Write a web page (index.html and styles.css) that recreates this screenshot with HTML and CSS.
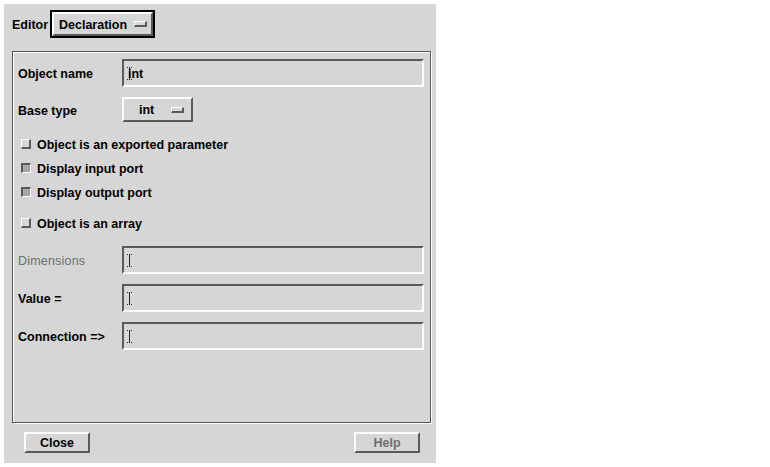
FILE: index.html
```html
<!DOCTYPE html>
<html>
<head>
<meta charset="utf-8">
<link rel="stylesheet" href="styles.css">
</head>
<body>
<div class="dialog">
  <div class="topbar">
    <span class="lbl">Editor</span>
    <div class="focus">
      <div class="optbtn editor"><span>Declaration</span><i class="ind"></i></div>
    </div>
  </div>
  <div class="frame">
    <div class="row r-name">
      <span class="lbl col">Object name</span>
      <div class="field"><i class="cursor"></i><span class="val">int</span></div>
    </div>
    <div class="row r-base">
      <span class="lbl col">Base type</span>
      <div class="optbtn base"><span>int</span><i class="ind"></i></div>
    </div>
    <div class="check c1"><i class="box"></i><span class="lbl">Object is an exported parameter</span></div>
    <div class="check"><i class="box on"></i><span class="lbl">Display input port</span></div>
    <div class="check"><i class="box on"></i><span class="lbl">Display output port</span></div>
    <div class="check c4"><i class="box"></i><span class="lbl">Object is an array</span></div>
    <div class="row r-dim">
      <span class="lbl col dis">Dimensions</span>
      <div class="field"><i class="cursor"></i></div>
    </div>
    <div class="row r-val">
      <span class="lbl col">Value =</span>
      <div class="field"><i class="cursor"></i></div>
    </div>
    <div class="row r-val">
      <span class="lbl col">Connection =&gt;</span>
      <div class="field"><i class="cursor"></i></div>
    </div>
  </div>
  <div class="bottombar">
    <div class="btn">Close</div>
    <div class="btn dis">Help</div>
  </div>
</div>
</body>
</html>
```
FILE: styles.css
```css
html, body {
  margin: 0;
  padding: 0;
  background: #ffffff;
}
body {
  font-family: "Liberation Sans", Arial, sans-serif;
  font-size: 12.5px;
  font-weight: bold;
  color: #000;
}
.dialog {
  margin: 4px 0 0 4px;
  width: 432px;
  height: 459px;
  background: #d6d6d6;
  box-sizing: border-box;
  display: flex;
  flex-direction: column;
}
.lbl {
  padding-top: 2px;
}
.topbar {
  display: flex;
  align-items: center;
  height: 28px;
  margin-top: 6px;
  padding-left: 8px;
}
.topbar .lbl {
  width: 38px;
}
.focus {
  border: 2px solid #000;
  width: 105px;
  height: 28px;
  box-sizing: border-box;
  display: flex;
}
.optbtn {
  box-sizing: border-box;
  border-style: solid;
  border-width: 2px;
  border-color: #fff #5a5a5a #5a5a5a #fff;
  display: flex;
  align-items: center;
}
.optbtn span {
  padding-top: 1px;
}
.optbtn.editor {
  flex: 1;
  padding-left: 5px;
}
.optbtn.editor .ind {
  margin-left: 7px;
}
.ind {
  display: block;
  width: 13px;
  height: 6px;
  box-sizing: border-box;
  border-style: solid;
  border-width: 1px 2px 2px 1px;
  border-color: #fff #5a5a5a #5a5a5a #fff;
  background: #d6d6d6;
}
.frame {
  margin: 13px 0 0 8px;
  width: 419px;
  height: 372px;
  box-sizing: border-box;
  border: 1px solid #555;
  box-shadow: 1px 1px 0 #fff, inset 1px 1px 0 #fff;
  display: flex;
  flex-direction: column;
  padding-left: 5px;
}
.row {
  display: flex;
  align-items: center;
}
.col {
  width: 104px;
  flex: none;
}
.lbl.dis {
  color: #6e6e6e;
  font-weight: normal;
  letter-spacing: 0.2px;
}
.r-name { margin-top: 7px; }
.r-base { margin-top: 10px; }
.r-dim { margin-top: 11px; }
.r-val { margin-top: 10px; }
.field {
  width: 302px;
  height: 28px;
  box-sizing: border-box;
  border-style: solid;
  border-width: 2px;
  border-color: #5a5a5a #fff #fff #5a5a5a;
  position: relative;
  display: flex;
  align-items: center;
  padding-left: 4px;
}
.val {
  padding-top: 2px;
}
.cursor {
  position: absolute;
  left: 3px;
  top: 6px;
  width: 5px;
  height: 13px;
  background:
    linear-gradient(#000, #000) 2px 1px / 1px 11px no-repeat,
    linear-gradient(90deg, #000 1px, transparent 1px, transparent 2px, #000 2px, #000 3px, transparent 3px, transparent 4px, #000 4px) 0 0 / 5px 1px no-repeat,
    linear-gradient(90deg, #000 1px, transparent 1px, transparent 2px, #000 2px, #000 3px, transparent 3px, transparent 4px, #000 4px) 0 12px / 5px 1px no-repeat;
  opacity: 0.8;
}
.optbtn.base {
  width: 71px;
  height: 25px;
  padding-left: 15px;
}
.optbtn.base .ind {
  margin-left: 17px;
}
.check {
  display: flex;
  align-items: center;
  height: 24px;
  padding-left: 3px;
}
.check .lbl {
  padding-top: 1px;
}
.check.c1 { margin-top: 10px; }
.check.c4 { margin-top: 7px; }
.box {
  display: block;
  width: 10px;
  height: 10px;
  box-sizing: border-box;
  border-style: solid;
  border-width: 1px 2px 2px 1px;
  border-color: #fff #5a5a5a #5a5a5a #fff;
  background: #d6d6d6;
  margin-right: 6px;
}
.box.on {
  border-width: 2px 1px 1px 2px;
  border-color: #5a5a5a #fff #fff #5a5a5a;
  background: #a6a6a6;
}
.bottombar {
  display: flex;
  justify-content: space-between;
  margin-top: 9px;
  padding: 0 16px 0 20px;
}
.btn {
  width: 66px;
  height: 21px;
  box-sizing: border-box;
  border-style: solid;
  border-width: 2px;
  border-color: #fff #5a5a5a #5a5a5a #fff;
  display: flex;
  align-items: center;
  justify-content: center;
  padding-top: 1px;
}
.btn.dis {
  color: #6e6e6e;
}
```
